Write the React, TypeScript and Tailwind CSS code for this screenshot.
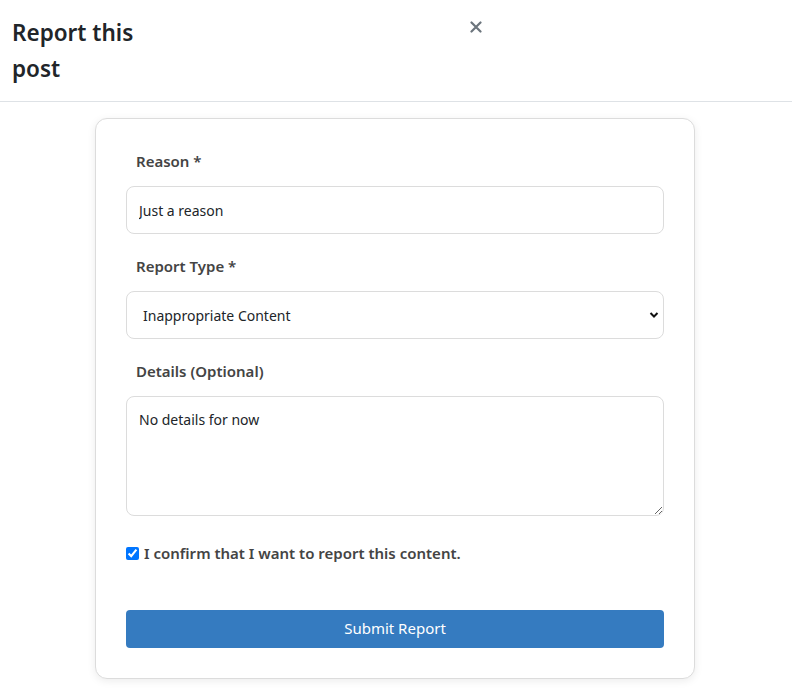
import { useState } from "react";

const font = { fontFamily: '"Noto Sans", "Open Sans", sans-serif' };

const Field = ({ label, children }: { label: string; children: React.ReactNode }) => (
  <div>
    <label className="block pl-[10px] text-[15px] leading-6 font-semibold text-[#444]">{label}</label>
    <div className="mt-[13px]">{children}</div>
  </div>
);

const App = () => {
  const [confirmed, setConfirmed] = useState(true);

  return (
    <div className="min-h-[693px] bg-white text-[#212529]" style={font}>
      <header className="border-b border-[#dee2e6]">
        <div className="w-[486px] flex items-start justify-between pl-3 pt-[15px] pb-[14px]">
          <h2 className="w-[135px] text-[22.5px] leading-9 font-semibold text-[#212529]">Report this post</h2>
          <button className="mt-[2px] w-5 h-5 flex items-center justify-center text-[#6c757d]" aria-label="Close">
            <svg width="12" height="12" viewBox="0 0 12 12" stroke="currentColor" strokeWidth="2.2" strokeLinecap="round">
              <path d="M1.5 1.5l9 9M10.5 1.5l-9 9" />
            </svg>
          </button>
        </div>
      </header>

      <div className="pt-4 pl-[95px]">
        <form className="w-[600px] rounded-xl border border-[#dcdcdc] bg-white px-[30px] pt-[30px] pb-[30px] shadow-[0_2px_8px_rgba(0,0,0,0.08)]">
          <div className="flex flex-col gap-[20px]">
            <Field label="Reason *">
              <input
                defaultValue="Just a reason"
                className="w-full h-12 rounded-lg border border-[#dcdcdc] px-3 text-[14px] text-[#212529] outline-none"
              />
            </Field>
            <Field label="Report Type *">
              <div className="relative">
                <select
                  defaultValue="inappropriate"
                  className="w-full h-12 appearance-none rounded-lg border border-[#dcdcdc] bg-white pl-4 pr-8 text-[14px] text-[#212529] outline-none"
                >
                  <option value="spam">Spam</option>
                  <option value="inappropriate">Inappropriate Content</option>
                  <option value="harassment">Harassment</option>
                  <option value="other">Other</option>
                </select>
                <svg className="absolute right-[5px] top-[20px] pointer-events-none" width="10" height="8" viewBox="0 0 10 8" fill="none" stroke="#111" strokeWidth="2">
                  <path d="M1.5 2l3.5 3.5L8.5 2" />
                </svg>
              </div>
            </Field>
            <Field label="Details (Optional)">
              <textarea
                defaultValue="No details for now"
                className="block w-full h-[120px] rounded-lg border border-[#dcdcdc] px-3 pt-[12px] text-[14px] text-[#212529] outline-none"
              />
            </Field>
          </div>

          <label className="mt-[26px] flex items-center gap-[5px] text-[15px] font-semibold text-[#444]">
            <input
              type="checkbox"
              checked={confirmed}
              onChange={(e) => setConfirmed(e.target.checked)}
              className="w-[13px] h-[13px] m-0 accent-[#0075ff]"
            />
            I confirm that I want to report this content.
          </label>

          <button
            type="button"
            className="mt-[45px] w-full h-[38px] rounded bg-[#357bc0] text-[15px] text-white"
          >
            Submit Report
          </button>
        </form>
      </div>
    </div>
  );
};

export default App;
